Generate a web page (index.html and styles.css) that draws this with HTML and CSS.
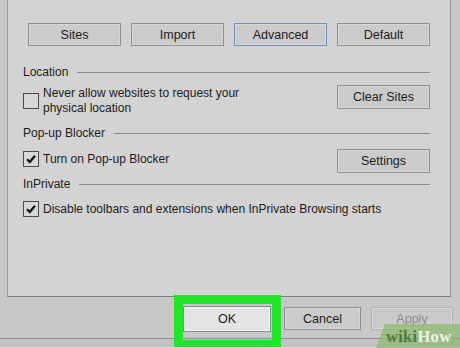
FILE: index.html
```html
<!DOCTYPE html>
<html lang="en">
<head>
  <meta charset="UTF-8" />
  <title>Internet Options - Privacy</title>
  <link rel="stylesheet" href="styles.css">
</head>
<body>
  <div class="dialog">
    <div class="panel">

      <div class="top-buttons">
        <button class="btn">Sites</button>
        <button class="btn">Import</button>
        <button class="btn focused">Advanced</button>
        <button class="btn">Default</button>
      </div>

      <!-- Location -->
      <div class="group-title location-title">
        <span>Location</span>
        <div class="rule"></div>
      </div>
      <div class="option-row location-row">
        <label class="check">
          <span class="box"></span>
          <span class="label-text">Never allow websites to request your<br>physical location</span>
        </label>
        <button class="btn side-btn">Clear Sites</button>
      </div>

      <!-- Pop-up Blocker -->
      <div class="group-title popup-title">
        <span>Pop-up Blocker</span>
        <div class="rule"></div>
      </div>
      <div class="option-row popup-row">
        <label class="check">
          <span class="box checked">
            <svg viewBox="0 0 12 12"><path d="M2 6.2 L4.8 9 L10 2.8" /></svg>
          </span>
          <span class="label-text">Turn on Pop-up Blocker</span>
        </label>
        <button class="btn side-btn">Settings</button>
      </div>

      <!-- InPrivate -->
      <div class="group-title inprivate-title">
        <span>InPrivate</span>
        <div class="rule"></div>
      </div>
      <div class="option-row inprivate-row">
        <label class="check">
          <span class="box checked">
            <svg viewBox="0 0 12 12"><path d="M2 6.2 L4.8 9 L10 2.8" /></svg>
          </span>
          <span class="label-text">Disable toolbars and extensions when InPrivate Browsing starts</span>
        </label>
      </div>
    </div>

    <div class="footer">
      <button class="btn ok-btn">OK</button>
      <button class="btn foot-btn cancel-btn">Cancel</button>
      <button class="btn foot-btn apply-btn" disabled>Apply</button>
    </div>
    <div class="footer-rule"></div>
  </div>

  <div class="highlight"></div>
  <div class="watermark"><span class="wiki">wiki</span><span class="how">How</span></div>
</body>
</html>
```

FILE: styles.css
```css
:root {
  --font-ui: 'Liberation Sans', 'Noto Sans', sans-serif;
  --text: #1c1c1c;
  --panel-bg: #d3d3d3;
  --outer-bg: #c8c8c8;
  --btn-bg: #cbcbcb;
  --btn-border: #8f8f8f;
  --rule: #8a8a8a;
}

html, body {
  margin: 0;
  width: 460px;
  height: 348px;
  overflow: hidden;
}

body {
  position: relative;
  background-color: var(--outer-bg);
  font-family: var(--font-ui);
  font-size: 12px;
  color: var(--text);
}

.dialog {
  display: flex;
  flex-direction: column;
  height: 348px;
}

.panel {
  margin-left: 7px;
  width: 444px;
  height: 297px;
  box-sizing: border-box;
  background-color: var(--panel-bg);
  border-left: 1px solid #9a9a9a;
  border-right: 1px solid #9a9a9a;
  border-bottom: 1px solid #7e7e7e;
  padding: 23px 20px 0 15px;
  display: flex;
  flex-direction: column;
}

.btn {
  font-family: var(--font-ui);
  font-size: 12.5px;
  color: var(--text);
  background-color: var(--btn-bg);
  border: 1px solid var(--btn-border);
  box-shadow: inset 0 0 0 1px #d8d8d8;
  height: 23px;
  padding: 0;
  margin: 0;
}

.top-buttons {
  display: flex;
  gap: 10px;
  padding-left: 5px;
}

.top-buttons .btn {
  width: 93px;
}

.top-buttons .focused {
  border-color: #6f8fbf;
}

.group-title {
  display: flex;
  align-items: center;
  gap: 9px;
  height: 16px;
  line-height: 16px;
}

.rule {
  flex: 1;
  height: 0;
  border-top: 1px solid var(--rule);
  margin-top: 1px;
}

.location-title { margin-top: 18px; }
.popup-title { margin-top: 9px; }
.inprivate-title { margin-top: 3px; }

.option-row {
  display: flex;
  align-items: flex-start;
  justify-content: space-between;
}

.location-row { margin-top: 5px; }
.popup-row { margin-top: 10px; }
.inprivate-row { margin-top: 9px; }

.check {
  display: flex;
  align-items: center;
  gap: 4px;
  line-height: 15px;
}

.location-row .check {
  padding-top: 1px;
}

.box {
  width: 14px;
  height: 14px;
  border: 1px solid #4a4a4a;
  background-color: #d8d8d8;
  display: flex;
  align-items: center;
  justify-content: center;
  flex-shrink: 0;
}

.box svg {
  width: 12px;
  height: 12px;
  fill: none;
  stroke: #111;
  stroke-width: 2.3;
}

.side-btn {
  width: 93px;
  height: 24px;
}

.popup-row .side-btn {
  margin-top: -2px;
}

.footer {
  display: flex;
  align-items: center;
  height: 41px;
  padding-left: 183px;
  gap: 13px;
}

.ok-btn {
  width: 88px;
  height: 26px;
  background-color: #e4e4e4;
  border-color: #8a8a8a;
  box-shadow: inset 0 0 0 1px #f6f6f6;
  margin-top: 2px;
}

.foot-btn {
  height: 23px;
  margin-top: 2px;
}

.cancel-btn {
  width: 77px;
}

.apply-btn {
  width: 82px;
  margin-left: -3px;
  color: #8a8a8a;
  border-color: #b4b4b4;
  background-color: #cacaca;
}

.footer-rule {
  border-top: 1px solid #8d8d8d;
  border-bottom: 1px solid #dedede;
  height: 8px;
  background-color: #c2c2c2;
}

/* green callout round the OK button */
.highlight {
  position: absolute;
  left: 174px;
  top: 295px;
  width: 107px;
  height: 52px;
  box-sizing: border-box;
  border: 9px solid #22e62a;
  border-bottom-width: 7px;
}

.watermark {
  position: absolute;
  left: 376px;
  top: 324px;
  width: 84px;
  height: 24px;
  background-color: rgba(140, 185, 110, 0.7);
  clip-path: polygon(9px 0, 100% 0, 100% 100%, 0 100%);
  font-family: 'Liberation Serif', 'DejaVu Serif', serif;
  font-weight: bold;
  font-size: 16.5px;
  line-height: 25px;
  padding-left: 10px;
  box-sizing: border-box;
  letter-spacing: 0.3px;
}

.wiki { color: #4d7b33; }
.how { color: #eef3ea; }
```
